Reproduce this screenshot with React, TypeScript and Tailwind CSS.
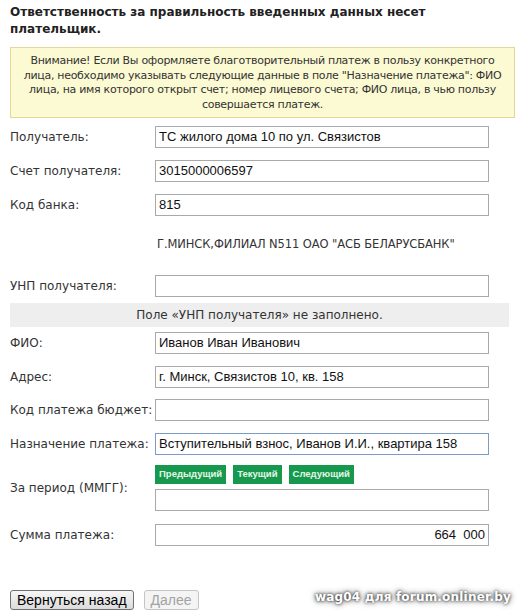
import React from 'react'

const tahoma = "font-['DejaVu_Sans',Tahoma,sans-serif]"
const arial = "font-['Liberation_Sans',Arial,sans-serif]"

function Field({ label, value, focused, right, mt }: { label: string; value?: string; focused?: boolean; right?: boolean; mt: string }) {
  return (
    <div className={`flex items-center ${mt}`}>
      <div className={`w-[145px] shrink-0 text-[12px] text-[#333] ${tahoma}`}>{label}</div>
      <div
        className={`w-[334px] h-[22px] border bg-white px-[3px] flex items-center whitespace-pre text-[13px] text-[#111] ${arial} ${
          focused ? 'border-[#7a9cc7]' : 'border-[#a9a9a9]'
        } ${right ? 'justify-end' : ''}`}
      >
        {value}
      </div>
    </div>
  )
}

export default function App() {
  return (
    <div className="bg-white w-[532px] h-[616px] pl-[10px] pt-[4px]">
      {/* Heading */}
      <h1 className={`text-[12px] leading-[17px] font-bold text-[#222] w-[440px] ${tahoma}`}>
        Ответственность за правильность введенных данных несет плательщик.
      </h1>

      {/* Warning */}
      <div
        className={`mt-[9px] w-[505px] border border-[#e3d897] bg-[#fcfad2] pt-[6px] pb-[5px] text-center whitespace-nowrap text-[11px] leading-[14.5px] tracking-[-0.3px] text-[#333] ${tahoma}`}
      >
        Внимание! Если Вы оформляете благотворительный платеж в пользу конкретного
        <br />
        лица, необходимо указывать следующие данные в поле "Назначение платежа": ФИО
        <br />
        лица, на имя которого открыт счет; номер лицевого счета; ФИО лица, в чью пользу
        <br />
        совершается платеж.
      </div>

      <Field mt="mt-[8px]" label="Получатель:" value="ТС жилого дома 10 по ул. Связистов" />
      <Field mt="mt-[12px]" label="Счет получателя:" value="3015000006597" />
      <Field mt="mt-[12px]" label="Код банка:" value="815" />

      <div className={`mt-[20px] pl-[147px] h-[16px] leading-[16px] text-[11.5px] tracking-[-0.1px] text-[#333] ${tahoma}`}>
        Г.МИНСК,ФИЛИАЛ N511 ОАО "АСБ БЕЛАРУСБАНК"
      </div>

      <Field mt="mt-[23px]" label="УНП получателя:" />

      {/* Validation notice */}
      <div className={`mt-[6px] w-[499px] h-[24px] bg-[#eeeeee] flex items-center justify-center text-[12px] text-[#333] ${tahoma}`}>
        Поле «УНП получателя» не заполнено.
      </div>

      <Field mt="mt-[5px]" label="ФИО:" value="Иванов Иван Иванович" />
      <Field mt="mt-[12px]" label="Адрес:" value="г. Минск, Связистов 10, кв. 158" />
      <Field mt="mt-[11px]" label="Код платежа бюджет:" />
      <Field mt="mt-[12px]" label="Назначение платежа:" value="Вступительный взнос, Иванов И.И., квартира 158" focused />

      {/* Period */}
      <div className="flex items-center mt-[10px]">
        <div className={`w-[145px] shrink-0 text-[12px] text-[#333] ${tahoma}`}>За период (ММГГ):</div>
        <div className="flex flex-col">
          <div className={`flex gap-[7px] text-[9.5px] font-bold text-[#e4f7ea] ${arial}`}>
            <span className="h-[19px] px-[4px] flex items-center bg-[#17994d]">Предыдущий</span>
            <span className="h-[19px] px-[4px] flex items-center bg-[#17994d]">Текущий</span>
            <span className="h-[19px] px-[4px] flex items-center bg-[#17994d]">Следующий</span>
          </div>
          <div className="mt-[5px] w-[334px] h-[22px] border border-[#a9a9a9] bg-white" />
        </div>
      </div>

      <Field mt="mt-[13px]" label="Сумма платежа:" value="664  000" right />

      {/* Footer */}
      <div className="mt-[44px] flex items-center justify-between w-[505px]">
        <div className={`flex gap-[10px] text-[14px] ${arial}`}>
          <button className="h-[20px] px-[6px] rounded-[3px] border border-[#707070] bg-gradient-to-b from-[#f6f6f6] to-[#dcdcdc] text-black leading-none">
            Вернуться назад
          </button>
          <button className="h-[20px] px-[6px] rounded-[3px] border border-[#c5c5c5] bg-[#f4f4f4] text-[#a3a3a3] leading-none">
            Далее
          </button>
        </div>
        <div
          className={`text-[12px] font-bold text-white tracking-[0.2px] [text-shadow:0_0_3px_#222,0_0_6px_#444] pr-[4px] -mt-[6px] ${tahoma}`}
        >
          wag04 для forum.onliner.by
        </div>
      </div>
    </div>
  )
}
